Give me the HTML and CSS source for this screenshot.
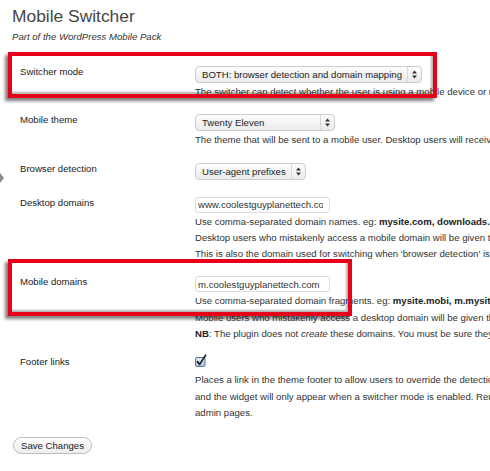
FILE: index.html
```html
<!DOCTYPE html>
<html lang="en">
<head>
<meta charset="utf-8">
<title>Mobile Switcher</title>
<link rel="stylesheet" href="styles.css">
</head>
<body>
<span class="menu-pointer"></span>
<div class="wrap">
  <h1 class="page-title">Mobile Switcher</h1>
  <p class="page-sub">Part of the WordPress Mobile Pack</p>

  <form class="settings">
    <div class="row">
      <div class="label">Switcher mode</div>
      <div class="field">
        <div class="select select-wide">
          <span class="select-value">BOTH: browser detection and domain mapping</span>
          <span class="select-arrow"><svg width="5" height="9" viewBox="0 0 5 9"><polygon points="0,3.6 2.5,0.4 5,3.6" /><polygon points="0,5.4 2.5,8.6 5,5.4" /></svg></span>
        </div>
        <p class="desc">The switcher can detect whether the user is using a mobile device or not, and switch to the mobile theme accordingly.</p>
      </div>
    </div>

    <div class="row">
      <div class="label">Mobile theme</div>
      <div class="field">
        <div class="select select-theme">
          <span class="select-value">Twenty Eleven</span>
          <span class="select-arrow"><svg width="5" height="9" viewBox="0 0 5 9"><polygon points="0,3.6 2.5,0.4 5,3.6" /><polygon points="0,5.4 2.5,8.6 5,5.4" /></svg></span>
        </div>
        <p class="desc">The theme that will be sent to a mobile user. Desktop users will receive the normal theme.</p>
      </div>
    </div>

    <div class="row row-solo">
      <div class="label">Browser detection</div>
      <div class="field">
        <div class="select select-detect">
          <span class="select-value">User-agent prefixes</span>
          <span class="select-arrow"><svg width="5" height="9" viewBox="0 0 5 9"><polygon points="0,3.6 2.5,0.4 5,3.6" /><polygon points="0,5.4 2.5,8.6 5,5.4" /></svg></span>
        </div>
      </div>
    </div>

    <div class="row">
      <div class="label">Desktop domains</div>
      <div class="field">
        <input class="text" type="text" value="www.coolestguyplanettech.com">
        <p class="desc">Use comma-separated domain names. eg: <b>mysite.com, downloads.mysite.com</b><br>Desktop users who mistakenly access a mobile domain will be given the desktop theme.<br>This is also the domain used for switching when 'browser detection' is enabled.</p>
      </div>
    </div>

    <div class="row">
      <div class="label">Mobile domains</div>
      <div class="field">
        <input class="text" type="text" value="m.coolestguyplanettech.com">
        <p class="desc">Use comma-separated domain fragments. eg: <b>mysite.mobi, m.mysite.com</b><br>Mobile users who mistakenly access a desktop domain will be given the mobile theme.<br><b>NB</b>: The plugin does not <i>create</i> these domains. You must be sure they resolve.</p>
      </div>
    </div>

    <div class="row">
      <div class="label">Footer links</div>
      <div class="field">
        <svg class="check" width="12" height="13" viewBox="0 0 12 13">
          <defs>
            <linearGradient id="checkFill" x1="0" y1="0" x2="0" y2="1">
              <stop offset="0" stop-color="#e4eefa"/>
              <stop offset="1" stop-color="#a9c3e6"/>
            </linearGradient>
          </defs>
          <rect x="0.5" y="3.5" width="9.5" height="9" rx="1.5" fill="url(#checkFill)" stroke="#5d6e86"/>
          <path d="M2.4 7.6 L4.6 10.4 L10.6 1.2" fill="none" stroke="#1c2230" stroke-width="1.7" stroke-linecap="round" stroke-linejoin="round"/>
        </svg>
        <p class="desc">Places a link in the theme footer to allow users to override the detection and switch themes.<br>and the widget will only appear when a switcher mode is enabled. Remember to enable it in the<br>admin pages.</p>
      </div>
    </div>
  </form>

  <button class="button" type="button">Save Changes</button>

  <span class="callout callout-mode"></span>
  <span class="callout callout-mobile"></span>
</div>
</body>
</html>
```

FILE: styles.css
```css
html, body {
  margin: 0;
  padding: 0;
  background: #fff;
  overflow: hidden;
}

body {
  position: relative;
  width: 490px;
  height: 471px;
  font-family: "Liberation Sans", Arial, sans-serif;
  font-size: 9.6px;
  color: #333;
}

/* grey pointer peeking in from the admin menu */
.menu-pointer {
  position: absolute;
  left: 0;
  top: 173px;
  width: 0;
  height: 0;
  border-top: 5px solid transparent;
  border-bottom: 5px solid transparent;
  border-left: 4px solid #8a8a8a;
}

.wrap {
  position: relative;
  padding: 5px 12px 0;
}

.page-title {
  margin: 0;
  font-size: 17.4px;
  line-height: 22px;
  font-weight: normal;
  color: #464646;
}

.page-sub {
  margin: 2px 0 0;
  font-style: italic;
  line-height: 16px;
  color: #333;
}

.settings {
  margin-top: 13px;
}

.row {
  display: flex;
  padding: 6px 0 6px 8px;
}

.row-solo {
  padding-bottom: 8px;
}

.label {
  flex: 0 0 175px;
  line-height: 16px;
  color: #222;
}

.field {
  flex: 1;
  min-width: 0;
}

.select {
  display: flex;
  box-sizing: border-box;
  height: 17px;
  margin: 2px 0 1px;
  border: 1px solid #cdcdcd;
  border-radius: 4px;
  background: linear-gradient(#fdfdfd, #ebebeb);
  color: #222;
}

.select-wide { width: 227px; }
.select-theme { width: 140px; }
.select-detect { width: 111px; }

.select-value {
  flex: 1;
  padding-left: 6px;
  line-height: 15px;
  white-space: nowrap;
  overflow: hidden;
}

.select-arrow {
  flex: 0 0 13px;
  display: flex;
  align-items: center;
  justify-content: center;
  border-left: 1px solid #d8d8d8;
}

.select-arrow polygon {
  fill: #333;
}

.text {
  display: block;
  box-sizing: border-box;
  width: 135px;
  height: 16px;
  margin: 2px 0 1px;
  padding: 0 6px 0 2px;
  border: 1px solid #dcdcdc;
  border-radius: 3px;
  background: #fff;
  font-family: "Liberation Sans", Arial, sans-serif;
  font-size: 9.6px;
  color: #333;
  outline: none;
}

.desc {
  margin: 0;
  line-height: 16.3px;
  white-space: nowrap;
  color: #333;
}

.desc b {
  color: #222;
}

.check {
  display: block;
  margin-bottom: 5px;
}

.button {
  display: block;
  box-sizing: border-box;
  width: 79px;
  height: 17px;
  margin: 10px 0 0 1px;
  padding: 0;
  border: 1px solid #bdbdbd;
  border-radius: 9px;
  background: linear-gradient(#ffffff, #ededed);
  font-family: "Liberation Sans", Arial, sans-serif;
  font-size: 9.6px;
  color: #222;
}

/* red highlight frames drawn over the form */
.callout {
  position: absolute;
  left: 8px;
  box-sizing: border-box;
  border: 4px solid #e6001a;
  box-shadow: -3px 3px 3px rgba(0, 0, 0, 0.5), inset -2px -2px 2px rgba(0, 0, 0, 0.3);
  pointer-events: none;
}

.callout-mode {
  top: 52px;
  width: 429px;
  height: 46px;
}

.callout-mobile {
  top: 259px;
  width: 344px;
  height: 57px;
}
```
